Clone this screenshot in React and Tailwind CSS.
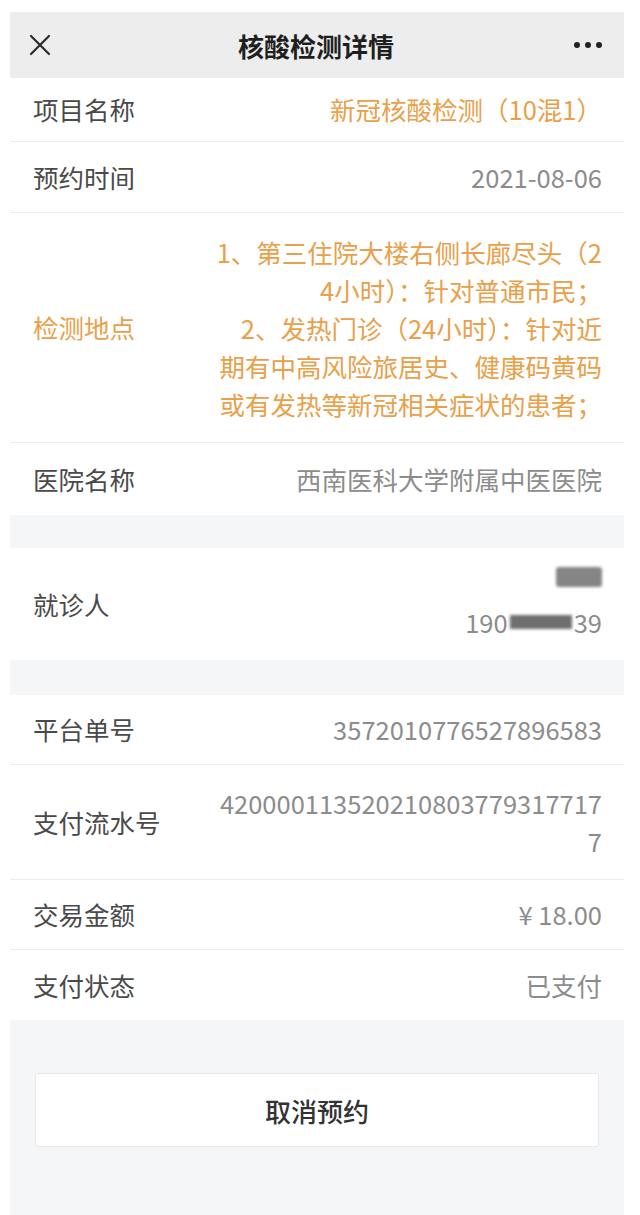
export default function App() {
  const font = { fontFamily: '"Noto Sans CJK SC", "Noto Sans", sans-serif' };

  const Row = ({ label, children, h = "h-[70px]", labelClass = "text-[#4a4a4a]", last = false }) => (
    <div className={`flex items-center justify-between pl-[23px] pr-[22px] ${h} ${last ? "" : "border-b border-[#ececec]"}`}>
      <span className={`text-[25.5px] shrink-0 ${labelClass}`}>{label}</span>
      <div className="text-right text-[25.5px] text-[#8c8c8c]">{children}</div>
    </div>
  );

  return (
    <div className="w-[640px] h-[1215px] bg-white px-[10px] pt-[12px] overflow-hidden" style={font}>
      <div className="w-[614px] h-full bg-[#f5f6f8] flex flex-col">
        {/* header */}
        <div className="h-[66px] bg-[#ededed] flex items-center justify-between px-[18px] shrink-0">
          <svg width="24" height="24" viewBox="0 0 24 24" fill="none" stroke="#2b2b2b" strokeWidth="2.2" strokeLinecap="round">
            <path d="M3 3L21 21M21 3L3 21" />
          </svg>
          <span className="text-[26px] font-bold text-[#1f1f1f] pl-[6px]">核酸检测详情</span>
          <div className="flex gap-[5px] pr-[4px]">
            <span className="w-[6px] h-[6px] rounded-full bg-[#222]" />
            <span className="w-[6px] h-[6px] rounded-full bg-[#222]" />
            <span className="w-[6px] h-[6px] rounded-full bg-[#222]" />
          </div>
        </div>

        {/* detail section */}
        <div className="bg-white">
          <Row label="项目名称" h="h-[64px]">
            <span className="text-[#e9a049]">新冠核酸检测（10混1）</span>
          </Row>
          <Row label="预约时间" h="h-[71px]">2021-08-06</Row>
          <Row label="检测地点" h="h-[230px]" labelClass="text-[#e9a049]">
            <div className="text-[25.5px] leading-[38px] text-[#e9a049] whitespace-nowrap">
              <div>1、第三住院大楼右侧长廊尽头（2</div>
              <div>4小时）：针对普通市民；</div>
              <div>2、发热门诊（24小时）：针对近</div>
              <div>期有中高风险旅居史、健康码黄码</div>
              <div>或有发热等新冠相关症状的患者；</div>
            </div>
          </Row>
          <Row label="医院名称" h="h-[72px]" last>西南医科大学附属中医医院</Row>
        </div>

        <div className="h-[33px] shrink-0" />

        {/* patient */}
        <div className="bg-white">
          <Row label="就诊人" h="h-[112px]" last>
            <div className="flex flex-col items-end gap-[16px]">
              <span className="w-[46px] h-[20px] rounded-[3px] bg-[#858585] blur-[1.5px]" />
              <div className="flex items-center">
                <span>190</span>
                <span className="w-[62px] h-[14px] bg-[#6f6f6f] blur-[1.5px] mx-[2px]" />
                <span>39</span>
              </div>
            </div>
          </Row>
        </div>

        <div className="h-[35px] shrink-0" />

        {/* payment */}
        <div className="bg-white">
          <Row label="平台单号">3572010776527896583</Row>
          <Row label="支付流水号" h="h-[115px]">
            <div className="leading-[38px] whitespace-nowrap">
              <div>420000113520210803779317717</div>
              <div>7</div>
            </div>
          </Row>
          <Row label="交易金额">¥ 18.00</Row>
          <Row label="支付状态" last>已支付</Row>
        </div>

        <div className="pt-[53px] px-[25px]">
          <button className="w-full h-[74px] bg-white border border-[#e8e8e8] rounded-[3px] text-[26px] font-medium text-[#333]">
            取消预约
          </button>
        </div>
      </div>
    </div>
  );
}
